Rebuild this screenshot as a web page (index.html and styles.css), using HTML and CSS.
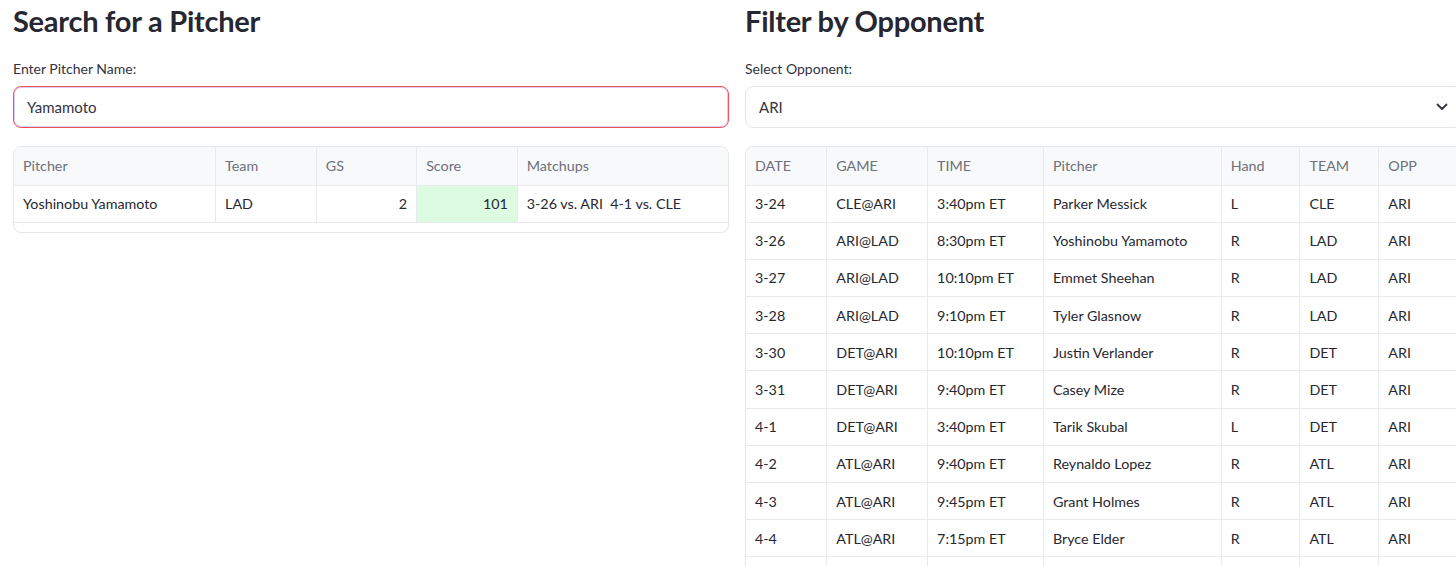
FILE: index.html
```html
<!DOCTYPE html>
<html>
<head>
<meta charset="utf-8">
<link rel="stylesheet" href="styles.css">
</head>
<body>
<div class="page">
  <section class="col">
    <h2 class="title">Search for a Pitcher</h2>
    <label class="label">Enter Pitcher Name:</label>
    <div class="input focused">Yamamoto</div>
    <div class="table-wrap small">
      <table class="grid">
        <colgroup><col style="width:202px"><col style="width:101px"><col style="width:101px"><col style="width:101px"><col style="width:211px"></colgroup>
        <thead><tr><th>Pitcher</th><th>Team</th><th>GS</th><th>Score</th><th>Matchups</th></tr></thead>
        <tbody><tr><td>Yoshinobu Yamamoto</td><td>LAD</td><td class="num">2</td><td class="num score">101</td><td>3-26 vs. ARI&nbsp; 4-1 vs. CLE</td></tr></tbody>
      </table>
    </div>
  </section>
  <section class="col">
    <h2 class="title">Filter by Opponent</h2>
    <label class="label">Select Opponent:</label>
    <div class="input select"><span>ARI</span>
      <svg class="chev" width="12" height="8" viewBox="0 0 12 8"><path d="M1.5 1.5 L6 6 L10.5 1.5" fill="none" stroke="#31333f" stroke-width="1.8" stroke-linecap="round" stroke-linejoin="round"/></svg>
    </div>
    <div class="table-wrap big">
      <table class="grid">
        <colgroup><col style="width:81px"><col style="width:101px"><col style="width:116px"><col style="width:178px"><col style="width:79px"><col style="width:79px"><col style="width:82px"></colgroup>
        <thead><tr><th>DATE</th><th>GAME</th><th>TIME</th><th>Pitcher</th><th>Hand</th><th>TEAM</th><th>OPP</th></tr></thead>
        <tbody>
          <tr><td>3-24</td><td>CLE@ARI</td><td>3:40pm ET</td><td>Parker Messick</td><td>L</td><td>CLE</td><td>ARI</td></tr>
          <tr><td>3-26</td><td>ARI@LAD</td><td>8:30pm ET</td><td>Yoshinobu Yamamoto</td><td>R</td><td>LAD</td><td>ARI</td></tr>
          <tr><td>3-27</td><td>ARI@LAD</td><td>10:10pm ET</td><td>Emmet Sheehan</td><td>R</td><td>LAD</td><td>ARI</td></tr>
          <tr><td>3-28</td><td>ARI@LAD</td><td>9:10pm ET</td><td>Tyler Glasnow</td><td>R</td><td>LAD</td><td>ARI</td></tr>
          <tr><td>3-30</td><td>DET@ARI</td><td>10:10pm ET</td><td>Justin Verlander</td><td>R</td><td>DET</td><td>ARI</td></tr>
          <tr><td>3-31</td><td>DET@ARI</td><td>9:40pm ET</td><td>Casey Mize</td><td>R</td><td>DET</td><td>ARI</td></tr>
          <tr><td>4-1</td><td>DET@ARI</td><td>3:40pm ET</td><td>Tarik Skubal</td><td>L</td><td>DET</td><td>ARI</td></tr>
          <tr><td>4-2</td><td>ATL@ARI</td><td>9:40pm ET</td><td>Reynaldo Lopez</td><td>R</td><td>ATL</td><td>ARI</td></tr>
          <tr><td>4-3</td><td>ATL@ARI</td><td>9:45pm ET</td><td>Grant Holmes</td><td>R</td><td>ATL</td><td>ARI</td></tr>
          <tr><td>4-4</td><td>ATL@ARI</td><td>7:15pm ET</td><td>Bryce Elder</td><td>R</td><td>ATL</td><td>ARI</td></tr>
          <tr><td>&nbsp;</td><td></td><td></td><td></td><td></td><td></td><td></td></tr>
        </tbody>
      </table>
    </div>
  </section>
</div>
</body>
</html>
```

FILE: styles.css
```css
html, body {
  margin: 0;
  padding: 0;
  background: #ffffff;
  overflow: hidden;
  height: 566px;
}
body {
  font-family: Lato, "Liberation Sans", sans-serif;
  color: #31333f;
}
.page {
  display: grid;
  grid-template-columns: 716px 716px;
  column-gap: 16px;
  padding: 0 13px;
  width: 1480px;
}
.col {
  display: flex;
  flex-direction: column;
  min-width: 0;
}
.title {
  margin: 0;
  padding-top: 4px;
  height: 41px;
  font-size: 29px;
  font-weight: 700;
  line-height: 34px;
  color: #262730;
  letter-spacing: -0.25px;
}
.label {
  margin-top: 15px;
  height: 26px;
  font-size: 14px;
  line-height: 18px;
  color: #31333f;
}
.input {
  box-sizing: border-box;
  height: 42px;
  border: 1px solid #e4e5ea;
  border-radius: 8px;
  display: flex;
  align-items: center;
  padding: 0 13px;
  font-size: 15px;
  color: #31333f;
}
.input.focused {
  border-color: #f0525c;
  box-shadow: inset 0 0 0 1px rgba(150, 110, 220, 0.35);
}
.select {
  justify-content: space-between;
  padding: 0 12px 0 13px;
}
.chev {
  display: block;
}
.table-wrap {
  margin-top: 18px;
  border: 1px solid #e6e7ec;
  border-radius: 8px;
  overflow: hidden;
}
.table-wrap.small {
  padding-bottom: 9px;
}
.table-wrap.big {
  border-right: none;
  border-top-right-radius: 0;
}
.grid {
  border-collapse: collapse;
  table-layout: fixed;
  font-size: 14.3px;
}
.grid th, .grid td {
  box-sizing: border-box;
  padding: 0 9px;
  text-align: left;
  white-space: nowrap;
  overflow: hidden;
  border-right: 1px solid #e9eaee;
  border-bottom: 1px solid #e9eaee;
}
.grid th {
  height: 38px;
  font-weight: 400;
  color: #6d7079;
  background: #f8f9fb;
}
.grid td {
  height: 37.2px;
  color: #262730;
}
.small .grid th:last-child, .small .grid td:last-child {
  border-right: none;
}
.grid td.num {
  text-align: right;
}
.grid td.score {
  background: #dcfbe0;
}
```
